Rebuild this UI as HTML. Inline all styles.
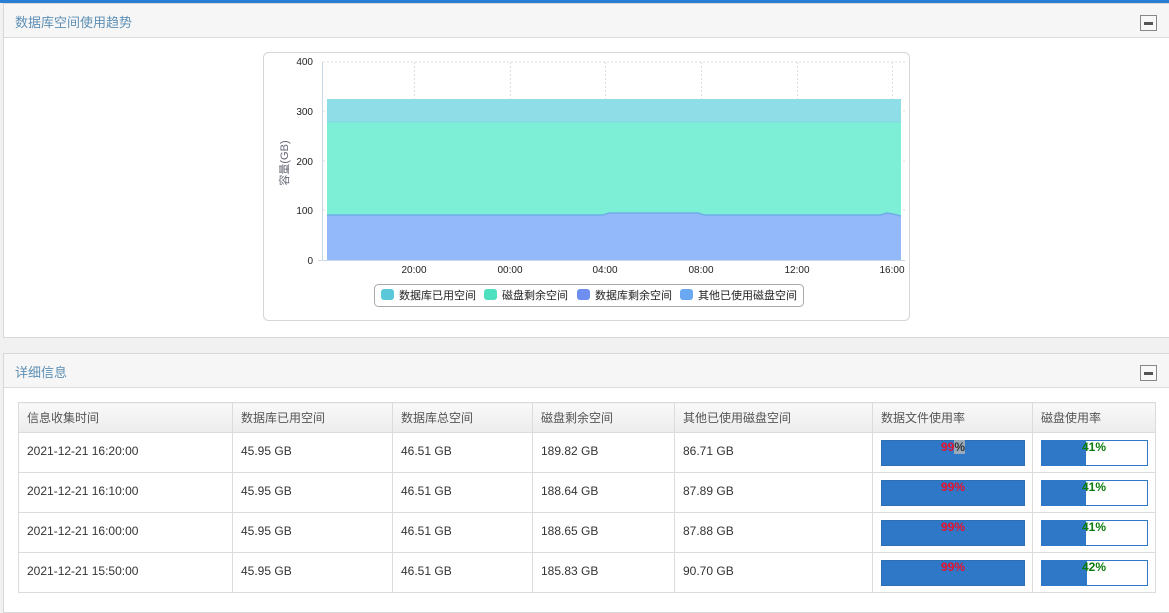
<!DOCTYPE html>
<html><head><meta charset="utf-8"><style>
*{margin:0;padding:0;box-sizing:border-box}
body{width:1169px;height:596px;overflow:hidden;background:#f1f1f1;font-family:"Liberation Sans","Noto Sans CJK SC",sans-serif;font-size:12px;color:#333;position:relative}
.topbar{position:absolute;left:0;top:0;width:1169px;height:3px;background:#2a7fd4}
.panel{position:absolute;left:3px;width:1170px;background:#fff;border:1px solid #d8d8d8}
.ph{height:34px;background:#f6f6f6;border-bottom:1px solid #dcdcdc;position:relative}
.ph span{position:absolute;left:11px;top:8px;font-size:13px;color:#5d8fb5}
.btn{position:absolute;left:1136px;top:11px;width:17px;height:16px;border:1px solid #888;background:#f8f8f8}
.btn:after{content:"";position:absolute;left:3px;top:6px;width:9px;height:3px;background:#555}
table{position:absolute;left:14px;top:48px;border-collapse:collapse;font-family:"Liberation Sans","Noto Sans CJK SC",sans-serif}
td,th{border:1px solid #dcdcdc;text-align:left;padding-left:8px;font-weight:normal;font-size:12px;color:#333;vertical-align:middle}
th{height:30px;background:linear-gradient(#f9f9f9,#ececec);color:#555}
td{height:40px;padding-bottom:3px}
.bar{position:relative;top:2px;height:26px;background:#2f78c8;border:1px solid #2f6fb3}
.bar b{position:absolute;left:0;right:0;top:-1px;text-align:center;font-size:12px;color:#e8102c}
.bar2{position:relative;top:2px;height:26px;background:#fff;border:1px solid #2f78c8;width:107px}
.bar2 i{position:absolute;left:0;top:0;bottom:0;background:#2f78c8}
.bar2 b{position:absolute;left:40px;top:-1px;font-size:12px;color:#0b7a0b}
</style></head><body>
<div class="topbar"></div>
<div class="panel" style="top:3px;height:335px">
<div class="ph"><span>数据库空间使用趋势</span><div class="btn"></div></div>
</div>
<svg style="position:absolute;left:0;top:0" width="1169" height="340" font-family="Liberation Sans, Noto Sans CJK SC, sans-serif">
<rect x="263.5" y="52.5" width="646" height="268" rx="5" fill="#fff" stroke="#d6d6d6"/>
<g stroke="#dedede" stroke-dasharray="2,2">
<line x1="323" y1="62" x2="905" y2="62"/><line x1="323" y1="111" x2="905" y2="111"/><line x1="323" y1="161" x2="905" y2="161"/><line x1="323" y1="210" x2="905" y2="210"/>
<line x1="414.5" y1="62" x2="414.5" y2="260"/><line x1="510.5" y1="62" x2="510.5" y2="260"/><line x1="605.5" y1="62" x2="605.5" y2="260"/><line x1="701.5" y1="62" x2="701.5" y2="260"/><line x1="797.5" y1="62" x2="797.5" y2="260"/><line x1="892.5" y1="62" x2="892.5" y2="260"/>
</g>
<rect x="327" y="99" width="574" height="23" fill="#8fdde6"/>
<rect x="327" y="122" width="574" height="93" fill="#7eefd7"/>
<line x1="327" y1="122" x2="901" y2="122" stroke="#7fd9e0"/>
<path d="M327 215 L603 215 L609 213 L698 213 L704 215 L880 215 L887 213 L893 214 L901 216 L901 260 L327 260Z" fill="#93b9fb"/>
<path d="M327 215 L603 215 L609 213 L698 213 L704 215 L880 215 L887 213 L893 214 L901 216" fill="none" stroke="#6eaee6" stroke-width="1.5"/>
<line x1="322.5" y1="62" x2="322.5" y2="260" stroke="#c8d6e6"/>
<line x1="318" y1="260.5" x2="905" y2="260.5" stroke="#c8d6e6"/>
<g font-size="10" fill="#222" text-anchor="end">
<text x="313" y="65">400</text><text x="313" y="115">300</text><text x="313" y="165">200</text><text x="313" y="214">100</text><text x="313" y="264">0</text>
</g>
<g font-size="10" fill="#222" text-anchor="middle">
<text x="414" y="273">20:00</text><text x="510" y="273">00:00</text><text x="605" y="273">04:00</text><text x="701" y="273">08:00</text><text x="797" y="273">12:00</text><text x="892" y="273">16:00</text>
</g>
<text transform="translate(288,163) rotate(-90)" font-size="11" fill="#667" text-anchor="middle">容量(GB)</text>
<rect x="374.5" y="284.5" width="429" height="22" rx="4" fill="#fff" stroke="#aaa"/>
<rect x="381" y="289" width="13" height="11" rx="3" fill="#5ac8d8"/>
<text x="399" y="299" font-size="11" fill="#222">数据库已用空间</text>
<rect x="484" y="289" width="13" height="11" rx="3" fill="#4fe0c0"/>
<text x="502" y="299" font-size="11" fill="#222">磁盘剩余空间</text>
<rect x="577" y="289" width="13" height="11" rx="3" fill="#6f8ff0"/>
<text x="595" y="299" font-size="11" fill="#222">数据库剩余空间</text>
<rect x="680" y="289" width="13" height="11" rx="3" fill="#6aa8f2"/>
<text x="698" y="299" font-size="11" fill="#222">其他已使用磁盘空间</text>
</svg>
<div class="panel" style="top:353px;height:260px">
<div class="ph"><span>详细信息</span><div class="btn"></div></div>
<table>
<tr><th style="width:214px">信息收集时间</th><th style="width:160px">数据库已用空间</th><th style="width:140px">数据库总空间</th><th style="width:142px">磁盘剩余空间</th><th style="width:198px">其他已使用磁盘空间</th><th style="width:160px">数据文件使用率</th><th style="width:123px">磁盘使用率</th></tr>
<tr><td>2021-12-21 16:20:00</td><td>45.95 GB</td><td>46.51 GB</td><td>189.82 GB</td><td>86.71 GB</td><td><div class="bar" style="width:144px"><b>99<span style="color:#333;background:#9ab">%</span></b></div></td><td><div class="bar2"><i style="width:44px"></i><b>41%</b></div></td></tr>
<tr><td>2021-12-21 16:10:00</td><td>45.95 GB</td><td>46.51 GB</td><td>188.64 GB</td><td>87.89 GB</td><td><div class="bar" style="width:144px"><b>99%</b></div></td><td><div class="bar2"><i style="width:44px"></i><b>41%</b></div></td></tr>
<tr><td>2021-12-21 16:00:00</td><td>45.95 GB</td><td>46.51 GB</td><td>188.65 GB</td><td>87.88 GB</td><td><div class="bar" style="width:144px"><b>99%</b></div></td><td><div class="bar2"><i style="width:44px"></i><b>41%</b></div></td></tr>
<tr><td>2021-12-21 15:50:00</td><td>45.95 GB</td><td>46.51 GB</td><td>185.83 GB</td><td>90.70 GB</td><td><div class="bar" style="width:144px"><b>99%</b></div></td><td><div class="bar2"><i style="width:45px"></i><b>42%</b></div></td></tr>
</table>
</div>
</body></html>
